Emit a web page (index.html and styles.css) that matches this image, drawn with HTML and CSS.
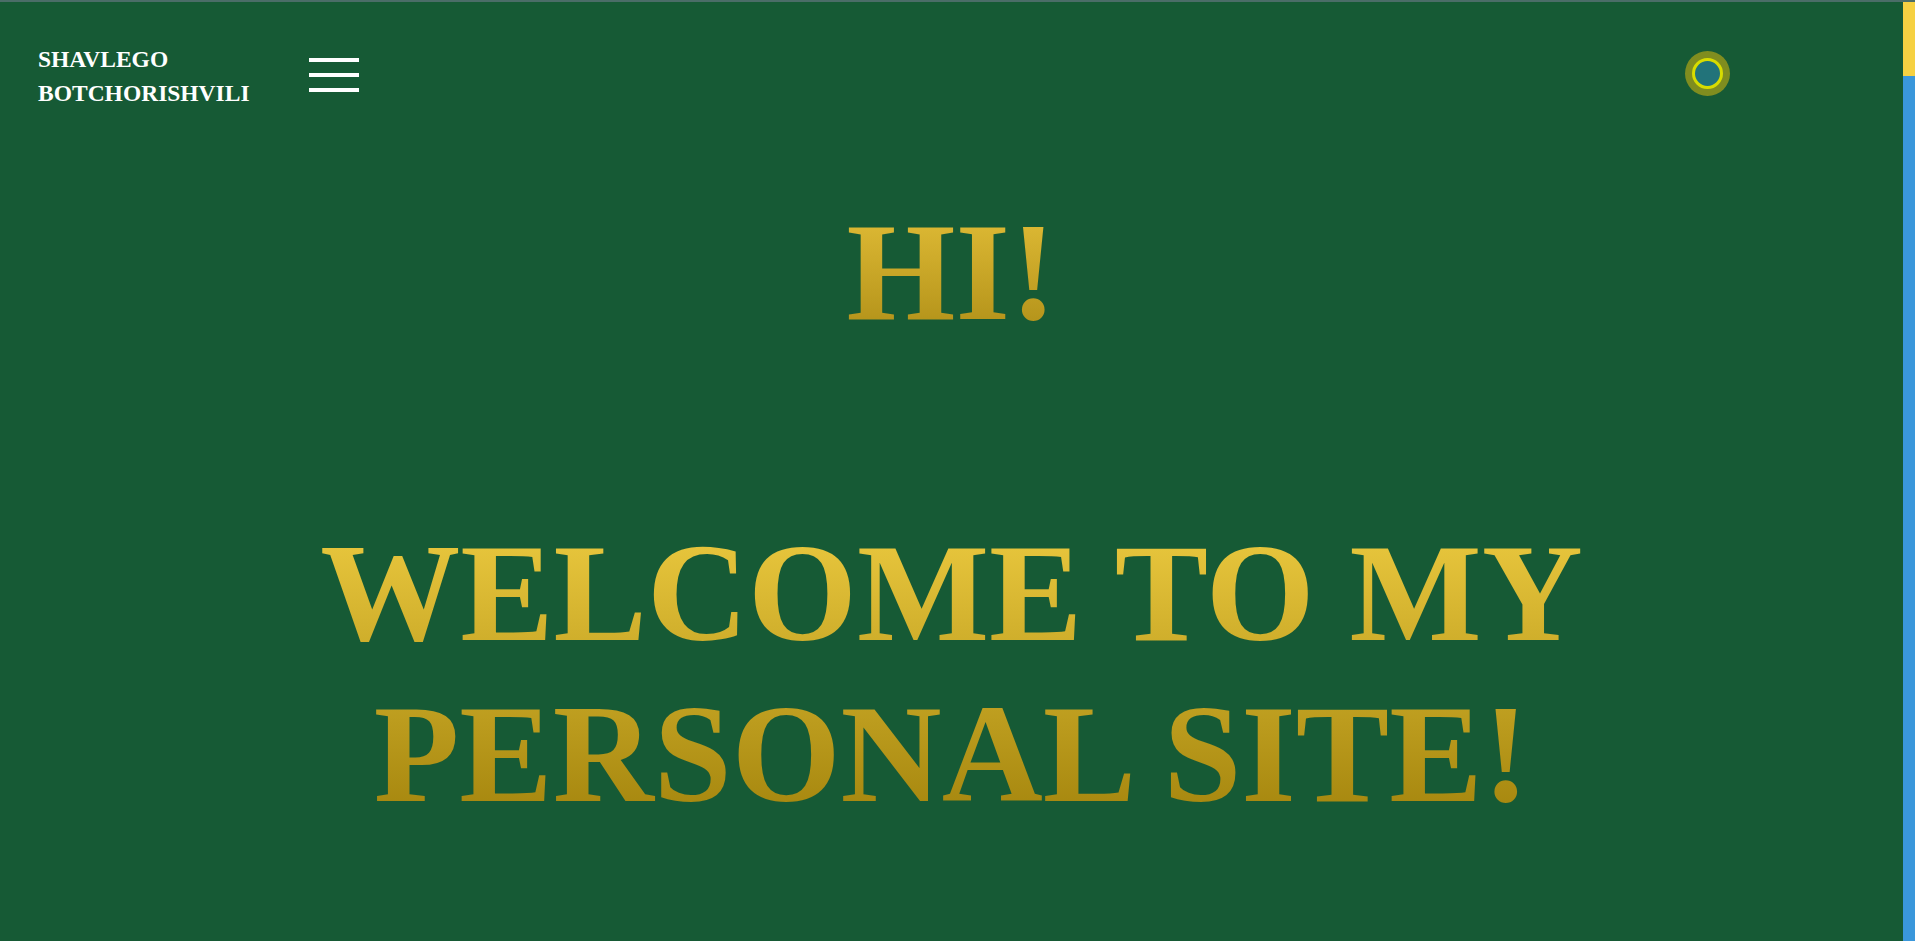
FILE: index.html
```html
<!DOCTYPE html>
<html lang="en">
<head>
<meta charset="utf-8">
<title>Shavlego Botchorishvili</title>
<link rel="stylesheet" href="styles.css">
</head>
<body>
<div class="topline"></div>
<div class="frame">
  <div class="page">
    <header class="header">
      <div class="brand">
        <div class="name">SHAVLEGO</div>
        <div class="name">BOTCHORISHVILI</div>
      </div>
      <button class="burger" aria-label="menu">
        <span class="bar"></span>
        <span class="bar"></span>
        <span class="bar"></span>
      </button>
      <div class="spacer"></div>
      <button class="toggle" aria-label="theme">
        <span class="toggle-ring"></span>
      </button>
    </header>
    <main class="hero">
      <h1 class="hi">HI!</h1>
      <h2 class="welcome">WELCOME TO MY<br>PERSONAL SITE!</h2>
    </main>
  </div>
  <div class="scrollbar">
    <div class="thumb"></div>
    <div class="track"></div>
  </div>
</div>
</body>
</html>
```

FILE: styles.css
```css
html, body {
  height: 100%;
}
body {
  margin: 0;
  overflow: hidden;
  background: #165a35;
  font-family: "Liberation Serif", "Times New Roman", serif;
  display: flex;
  flex-direction: column;
}
.topline {
  height: 2px;
  flex: none;
  background: #4b6d68;
}
.frame {
  flex: 1;
  display: flex;
  min-height: 0;
}
.page {
  flex: 1;
  min-width: 0;
}
.scrollbar {
  width: 12px;
  flex: none;
  display: flex;
  flex-direction: column;
}
.thumb {
  height: 74px;
  background: #f6d142;
}
.track {
  flex: 1;
  background: #3a97db;
}
.header {
  display: flex;
  align-items: center;
  padding: 40px 173px 0 38px;
}
.brand {
  display: flex;
  flex-direction: column;
}
.name {
  color: #ffffff;
  font-weight: bold;
  font-size: 23.5px;
  line-height: 34px;
}
.burger {
  margin-left: 59px;
  margin-top: -3px;
  background: none;
  border: 0;
  padding: 0;
  display: flex;
  flex-direction: column;
  gap: 11px;
  width: 50px;
}
.bar {
  display: block;
  height: 4px;
  width: 50px;
  background: #ffffff;
}
.spacer {
  flex: 1;
}
.toggle {
  width: 45px;
  height: 45px;
  border-radius: 50%;
  border: 0;
  padding: 0;
  margin-top: -6px;
  background: #808d1f;
  display: flex;
  align-items: center;
  justify-content: center;
}
.toggle-ring {
  display: block;
  width: 25px;
  height: 25px;
  border-radius: 50%;
  border: 3px solid #d8dc00;
  background: #22737a;
}
.hero {
  display: flex;
  flex-direction: column;
  align-items: center;
  padding-top: 81px;
}
.hi, .welcome {
  margin: 0;
  font-size: 140px;
  font-weight: bold;
  text-align: center;
  color: transparent;
  background: linear-gradient(180deg, #e8c33b 0%, #aa8a14 100%);
  -webkit-background-clip: text;
  background-clip: text;
}
.welcome {
  margin-top: 160px;
  background: linear-gradient(180deg, #eecc41 0%, #a1820b 100%);
  -webkit-background-clip: text;
  background-clip: text;
}
```
